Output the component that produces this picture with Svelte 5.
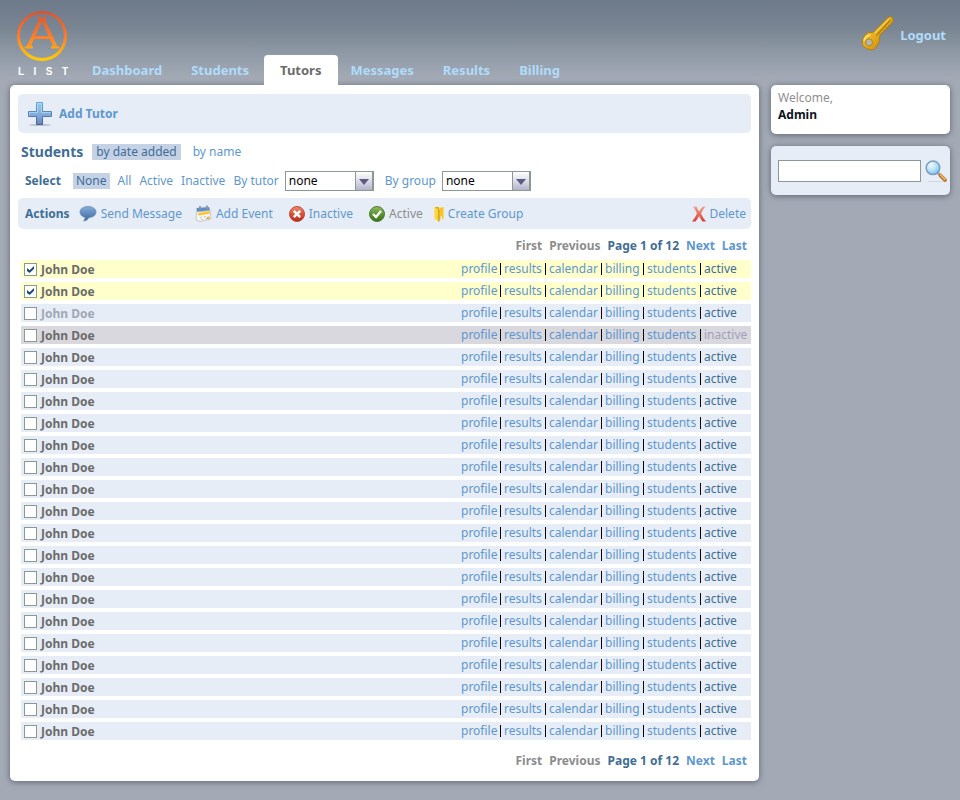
<script>
  const tabs = ['Dashboard', 'Students', 'Tutors', 'Messages', 'Results', 'Billing'];
  const current = 'Tutors';

  let tutors = $state(
    Array.from({ length: 22 }, (_, i) => ({
      id: i,
      name: 'John Doe',
      selected: i < 2,
      faded: i === 2,
      inactive: i === 3
    }))
  );

  const links = ['profile', 'results', 'calendar', 'billing', 'students'];
</script>

{#snippet pager()}
  <nav class="pager" aria-label="Pages">
    <span class="off">First</span>
    <span class="off">Previous</span>
    <span class="now">Page 1 of 12</span>
    <a href="#next">Next</a>
    <a href="#last">Last</a>
  </nav>
{/snippet}

<div class="page">
  <header>
    <a class="logo" href="#home">
      <svg width="52" height="52" viewBox="0 0 52 52" aria-hidden="true">
        <defs>
          <linearGradient id="fire" x1="0" y1="1" x2="0" y2="51" gradientUnits="userSpaceOnUse">
            <stop offset="0" stop-color="#cf5638" />
            <stop offset=".5" stop-color="#fd7c2b" />
            <stop offset="1" stop-color="#ffd000" />
          </linearGradient>
        </defs>
        <g fill="none" stroke="url(#fire)">
          <circle cx="26" cy="26" r="23.5" stroke-width="3" />
          <path stroke-width="3.600" d="M25.500 8 12.500 37M26.500 8l13 29" />
          <path stroke-width="3" d="M17 27.500h18" />
        </g>
        <path
          fill="url(#fire)"
          d="M21.500 7h9v1.200L29 10h-6l-1.500-1.800ZM8.500 38.500V37l3-1.500 4 0 1.500 1.500v1.500ZM35 38.500V37l1.500-1.500h4l3 1.500v1.500Z"
        />
      </svg>
      <span class="word"><b>L</b><b>I</b><b>S</b><b>T</b></span>
    </a>
    <nav class="tabs" aria-label="Main">
      {#each tabs as tab}
        <a
          href="#{tab.toLowerCase()}"
          class:current={tab === current}
          aria-current={tab === current ? 'page' : undefined}>{tab}</a
        >
      {/each}
    </nav>
    <a class="logout" href="#logout">
      <svg width="34" height="36" viewBox="0 0 34 36" aria-hidden="true">
        <defs>
          <linearGradient id="gold" x1="0" y1="0" x2="1" y2="1">
            <stop offset="0" stop-color="#f8d548" />
            <stop offset=".5" stop-color="#e5ac1c" />
            <stop offset="1" stop-color="#b47808" />
          </linearGradient>
        </defs>
        <path
          fill="url(#gold)"
          stroke="#a87510"
          stroke-width=".8"
          fill-rule="evenodd"
          d="M12 16.500 27 1.500l2-1 2.500 1 .8 4-2 1.300v1.800l-2.500.6v1.800l-2.500.7v2l-2.500.6v2l-2.500.7-1.500 2.500Q19 26 16 30.500T8 33.500 1.300 28.500Q.5 23 4 19T12 16.500ZM8 23a3.400 3.400 0 1 0 .1 0Z"
        />
        <path d="M15.500 19.500 29.500 4" stroke="#b07c10" stroke-width="1.200" fill="none" />
        <path d="M14 17 28 3" stroke="#ffe573" fill="none" />
        <path d="M3 25q1-5 6.500-6" stroke="#ffe573" stroke-width="1.500" fill="none" />
        <circle cx="8" cy="26.400" r="3.400" stroke="#b98a24" fill="#c3c8c8" fill-opacity=".7" />
      </svg>
      <span>Logout</span>
    </a>
  </header>

  <div class="columns">
    <main>
      <div class="bar add">
        <a href="#add-tutor">
          <svg width="24" height="24" viewBox="0 0 24 24" aria-hidden="true">
            <defs>
              <linearGradient id="plus" x1="0" y1="0" x2="0" y2="1">
                <stop offset="0" stop-color="#92cdf3" />
                <stop offset=".5" stop-color="#80b0de" />
                <stop offset="1" stop-color="#6f82b9" />
              </linearGradient>
              <linearGradient id="edge" x1="0" y1="0" x2="0" y2="1">
                <stop offset="0" stop-color="#6ba6da" />
                <stop offset="1" stop-color="#48618f" />
              </linearGradient>
            </defs>
            <ellipse cx="12" cy="23" rx="11" ry="1" fill="#b9c1cf" />
            <path fill="url(#plus)" stroke="url(#edge)" d="M8.500.5h6v9h9v5h-9v8h-6v-8h-8v-5h8Z" />
            <path fill="none" stroke="#b9dcf5" stroke-opacity=".7" d="M9.500 10.500v-9h4v9h9M1.500 13.500v-3h8" />
          </svg>
          Add Tutor
        </a>
      </div>

      <div class="sort">
        <h1>Students</h1>
        <a class="picked" href="#date">by date added</a>
        <a href="#name">by name</a>
      </div>

      <div class="filters">
        <strong>Select</strong>
        <a class="picked" href="#none">None</a>
        <a href="#all">All</a>
        <a href="#active">Active</a>
        <a href="#inactive">Inactive</a>
        <div class="choice">
          <label for="tutor">By tutor</label>
          <span class="select"><select id="tutor"><option>none</option></select></span>
        </div>
        <div class="choice">
          <label for="group">By group</label>
          <span class="select"><select id="group"><option>none</option></select></span>
        </div>
      </div>

      <div class="bar actions">
        <strong>Actions</strong>
        <button class="send">
          <svg width="18" height="16" viewBox="0 0 18 16" aria-hidden="true">
            <defs>
              <linearGradient id="talk" x1="0" y1="0" x2="0" y2="1">
                <stop offset="0" stop-color="#82acd9" />
                <stop offset="1" stop-color="#3d679f" />
              </linearGradient>
            </defs>
            <path
              fill="url(#talk)"
              stroke="#6485af"
              stroke-width=".7"
              d="M9 .5c4.500 0 8 2.300 8 5.500s-3 5.300-7 5.500c-1 2-3 3.300-5.500 3.500 1.300-1.200 1.700-2.500 1.300-3.800C2.800 10.500 1 8.700 1 6 1 2.800 4.500.5 9 .5Z"
            />
          </svg>
          Send Message
        </button>
        <button class="event">
          <svg width="17" height="17" viewBox="0 0 17 17" aria-hidden="true">
            <path fill="#5e8cc4" d="m1.500 3 12.500-1 1.500 5-13.500 2Z" />
            <path fill="#f4f5f6" stroke="#bbb9b2" stroke-width=".7" d="m1.500 7 13.500-1.500 1 8.500-11 2.500-4-1.500Z" />
            <path fill="#fbc529" d="m3 8 11.500-1.800.3 2.500L3.500 10.500Z" />
            <path stroke="#bdc5ce" d="m5 12.500 2-.4m2-.4 2-.4m-5 3.400 2-.4m2-.4 2-.4" />
            <path stroke="#8b99aa" stroke-width="1.800" d="M5 1v3.500M12 .5V4" />
            <path fill="#f29d38" d="m12 12 2.500-.5v2.200l-2.500.5Z" />
          </svg>
          Add Event
        </button>
        <button class="deactivate">
          <svg width="16" height="16" viewBox="0 0 16 16" aria-hidden="true">
            <defs>
              <linearGradient id="red" x1="0" y1="0" x2="0" y2="1">
                <stop offset="0" stop-color="#ec8b72" />
                <stop offset=".5" stop-color="#df4f38" />
                <stop offset="1" stop-color="#b7281b" />
              </linearGradient>
            </defs>
            <circle cx="8" cy="8" r="7.500" fill="url(#red)" stroke="#bd4a38" />
            <path stroke="#fff" stroke-width="2.600" d="m4.800 4.800 6.400 6.400m0-6.400-6.400 6.400" />
          </svg>
          Inactive
        </button>
        <button class="activate">
          <svg width="16" height="16" viewBox="0 0 16 16" aria-hidden="true">
            <defs>
              <linearGradient id="green" x1="0" y1="0" x2="0" y2="1">
                <stop offset="0" stop-color="#8fbd62" />
                <stop offset=".5" stop-color="#5b9434" />
                <stop offset="1" stop-color="#397319" />
              </linearGradient>
            </defs>
            <circle cx="8" cy="8" r="7.500" fill="url(#green)" stroke="#4e7a35" />
            <path fill="none" stroke="#fff" stroke-width="2.300" d="m4 8 3 3 5-6" />
          </svg>
          Active
        </button>
        <button class="create">
          <svg width="10" height="16" viewBox="0 0 10 16" aria-hidden="true">
            <path fill="#e4a60c" d="M1 1h4v13l-4-2Z" />
            <path fill="#ffd633" d="m.5 1 4 2.500V16l-4-3.500Z" />
            <path fill="#f8c51e" d="m5.500 2 4-1v11.500l-1.500 1V9.500l-1.500 1V14h-1Z" />
            <path stroke="#c58a06" d="M5 3.500v12" />
          </svg>
          Create Group
        </button>
        <button class="delete">
          <svg width="14" height="16" viewBox="0 0 14 16" aria-hidden="true">
            <defs>
              <linearGradient id="cross" x1="0" y1="0" x2="0" y2="1">
                <stop offset="0" stop-color="#f0a48e" />
                <stop offset="1" stop-color="#dc3b30" />
              </linearGradient>
            </defs>
            <path
              fill="url(#cross)"
              d="M1 .5h3.500q1 2.500 2.800 5Q9 2 11 .5h2.500Q11 3.500 9 7.500q2 4.500 5 8h-3.500q-2-2.500-3.400-5.500Q5.500 13 3.500 15.500H0q3.300-4 5-8Q3.500 4 1 .5Z"
            />
          </svg>
          Delete
        </button>
      </div>

      {@render pager()}

      <table>
        <tbody>
          {#each tutors as tutor (tutor.id)}
            <tr class:selected={tutor.selected} class:faded={tutor.faded} class:inactive={tutor.inactive}>
              <td class="who">
                <label><input type="checkbox" bind:checked={tutor.selected} />{tutor.name}</label>
              </td>
              {#each links as link}
                <td class={link}><a href="#{link}">{link}</a></td>
              {/each}
              <td class="state">{tutor.inactive ? 'inactive' : 'active'}</td>
            </tr>
          {/each}
        </tbody>
      </table>

      {@render pager()}
    </main>

    <aside>
      <section class="welcome">
        <div>Welcome,</div>
        <strong>Admin</strong>
      </section>
      <form class="search">
        <input type="text" aria-label="Search" />
        <button type="button" aria-label="Search">
          <svg width="22" height="22" viewBox="0 0 22 22" aria-hidden="true">
            <defs>
              <radialGradient id="lens" cx=".35" cy=".3" r=".8">
                <stop offset="0" stop-color="#f1faff" />
                <stop offset=".6" stop-color="#a9dcf8" />
                <stop offset="1" stop-color="#6eb5e6" />
              </radialGradient>
            </defs>
            <path stroke="#d3d7dc" d="M3 21.500h17" />
            <path stroke="#9fa3a8" stroke-width="2.500" d="m12.500 12.500 3 3" />
            <path stroke="#a76723" stroke-width="3.600" stroke-linecap="round" d="m15.500 15.500 4.500 4.500" />
            <path stroke="#efb05c" stroke-width="1.800" stroke-linecap="round" d="m15.500 15 4.500 4.500" />
            <circle cx="8" cy="7.800" r="6.800" fill="url(#lens)" stroke="#7e9fbd" stroke-width="1.500" />
          </svg>
        </button>
      </form>
    </aside>
  </div>
</div>

<style>
  :global(body) {
    margin: 0;
    background: #a3aab6;
  }
  .page {
    box-sizing: border-box;
    min-height: 100vh;
    padding: 0 10px 19px;
    background: linear-gradient(#6d7a8a, #7a8593 28px, #8c97a3 50px, #a3aab6 78px);
    font: 12px/16px 'Noto Sans', sans-serif;
    color: #6b6b6b;
  }
  a {
    color: #5e97cd;
    text-decoration: none;
  }
  svg {
    display: block;
    flex: none;
  }
  header {
    position: relative;
    z-index: 1;
    display: flex;
    height: 85px;
  }
  .logo {
    box-sizing: border-box;
    width: 68px;
    padding: 10px 0 0 6px;
    color: #fff;
  }
  .word {
    display: flex;
    justify-content: space-between;
    width: 50px;
    margin: 1px 0 0 2px;
    font: 10px/18px 'Liberation Sans', sans-serif;
  }
  .tabs {
    display: flex;
    align-items: flex-end;
    gap: 1px;
  }
  .tabs a {
    height: 30px;
    padding: 0 14px;
    color: #b0dcfb;
    font-size: 13px;
    font-weight: bold;
    line-height: 30px;
  }
  .tabs .current {
    margin-right: -3px;
    padding: 0 17px 0 16px;
    border-radius: 4px 4px 0 0;
    background: #fff;
    color: #6b6b6b;
  }
  .logout {
    display: flex;
    align-items: flex-start;
    gap: 5px;
    margin-left: auto;
    padding: 16px 4px 0 0;
    color: #b0dcfb;
    font-size: 13px;
    font-weight: bold;
    line-height: 38px;
  }
  .columns {
    display: flex;
    align-items: flex-start;
    gap: 12px;
  }
  main,
  .welcome,
  .search {
    border-radius: 5px;
    background: #fff;
    box-shadow: 0 1px 6px #5d6470;
  }
  main {
    flex: 1;
    padding: 9px 8px 10px;
  }
  .bar {
    display: flex;
    align-items: center;
    border-radius: 5px;
    background: #e6edf7;
  }
  .add {
    height: 39px;
    padding-left: 10px;
  }
  .add a {
    display: flex;
    align-items: center;
    gap: 7px;
    font-weight: bold;
  }
  .sort,
  .filters,
  .choice {
    display: flex;
    align-items: center;
  }
  .sort {
    gap: 12px;
    height: 38px;
    padding-left: 3px;
  }
  h1 {
    margin: 0 -3px 0 0;
    color: #3f6d95;
    font-size: 14px;
    font-weight: bold;
  }
  .picked {
    padding: 0 4px;
    background: #c5d2e6;
    color: #3f6d95;
  }
  .filters {
    gap: 8px;
    margin-bottom: 7px;
    padding-left: 7px;
  }
  .filters .picked {
    margin-left: 4px;
    padding: 0 3px;
  }
  .choice {
    gap: 6px;
    margin-right: 3px;
  }
  strong {
    color: #3f6d95;
  }
  label {
    color: #5e97cd;
  }
  .select {
    position: relative;
  }
  .select::before,
  .select::after {
    content: '';
    position: absolute;
    pointer-events: none;
  }
  .select::before {
    inset: 1px 1px 1px auto;
    width: 16px;
    border: solid #8b9994;
    border-width: 0 1px 0 1px;
    background: linear-gradient(#fff, #dcdce8 50%, #b4b4cc);
  }
  .select::after {
    top: 8px;
    right: 5px;
    border: 5px solid transparent;
    border-top: 6px solid #5c5c82;
    border-bottom: 0;
  }
  select {
    appearance: none;
    display: block;
    box-sizing: border-box;
    width: 89px;
    height: 20px;
    padding: 0 3px;
    border: 1px solid #8b9994;
    border-radius: 0;
    background: #fff;
    color: #000;
    font: inherit;
  }
  .actions {
    height: 31px;
    padding: 0 5px 0 7px;
  }
  button {
    display: flex;
    align-items: center;
    gap: 4px;
    padding: 0;
    border: 0;
    background: none;
    color: #5e97cd;
    font: inherit;
  }
  .send {
    margin-left: 9px;
  }
  .event {
    margin-left: 13px;
  }
  .deactivate,
  .activate {
    margin-left: 16px;
  }
  .activate {
    color: #8c8c8c;
  }
  .create {
    margin-left: 11px;
  }
  .delete {
    margin-left: auto;
  }
  .pager {
    display: flex;
    justify-content: flex-end;
    gap: 7px;
    padding: 9px 4px 2px 0;
    font-weight: bold;
  }
  .off {
    color: #8c8c8c;
  }
  .now {
    color: #3f6d95;
  }
  table {
    width: calc(100% - 3px);
    margin-left: 3px;
    border-spacing: 0 4px;
    table-layout: fixed;
  }
  td {
    height: 18px;
    box-sizing: border-box;
    padding: 1px 0 0 4px;
    vertical-align: top;
    background: linear-gradient(#000, #000) 0 3px / 1px 12px no-repeat;
  }
  tr {
    background: #e6edf7;
  }
  .selected {
    background: #ffffcb;
  }
  .inactive {
    background: #d9d8de;
  }
  .who {
    padding: 2px 0 0 3px;
    background: none;
  }
  .who label {
    display: flex;
    gap: 4px;
    color: #6b6b6b;
    font-weight: bold;
  }
  .faded label {
    color: #a0a8b4;
  }
  .profile {
    width: 39px;
    padding-left: 0;
    background: none;
  }
  .results {
    width: 45px;
  }
  .calendar {
    width: 56px;
  }
  .billing {
    width: 42px;
  }
  .students {
    width: 57px;
  }
  .state {
    width: 51px;
    color: #3f6d95;
  }
  .inactive .state {
    color: #a29fba;
  }
  input[type='checkbox'] {
    appearance: none;
    box-sizing: border-box;
    width: 13px;
    height: 13px;
    margin: 1px 0 0;
    border: 1px solid #8b9994;
    background: #fff;
  }
  input[type='checkbox']:checked::before {
    content: '';
    display: block;
    width: 7px;
    height: 7px;
    margin: 2px;
    background: #17497a;
    clip-path: polygon(0 30%, 38% 60%, 100% 0, 100% 40%, 38% 100%, 0 70%);
  }
  aside {
    display: flex;
    flex-direction: column;
    gap: 12px;
    width: 179px;
  }
  .welcome {
    padding: 4px 7px 11px;
    color: #8f8f8f;
    line-height: 17px;
  }
  .welcome strong {
    display: block;
    color: #0c1420;
  }
  .search {
    display: flex;
    align-items: center;
    gap: 4px;
    padding: 14px 3px 13px 7px;
    background: #e6edf7;
  }
  .search input {
    flex: 1;
    box-sizing: border-box;
    min-width: 0;
    height: 22px;
    padding: 0 4px;
    border: 1px solid #8b9994;
    font: inherit;
  }
</style>
